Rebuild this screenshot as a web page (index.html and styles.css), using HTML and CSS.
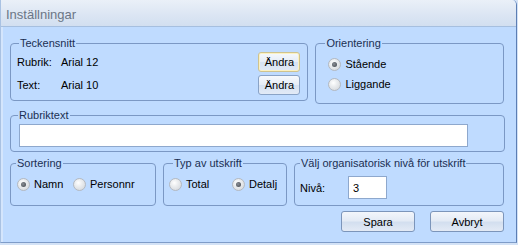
FILE: index.html
```html
<!DOCTYPE html>
<html lang="sv">
<head>
    <meta charset="UTF-8">
    <title>Inställningar</title>
    <link rel="stylesheet" href="styles.css">
</head>
<body>

    <div class="window">
        <div class="titlebar">Inställningar</div>

        <div class="content">
            <div class="row">
                <fieldset class="group fonts">
                    <legend>Teckensnitt</legend>
                    <div class="font-row">
                        <span class="key">Rubrik:</span>
                        <span class="val">Arial 12</span>
                        <button class="btn small focused">Ändra</button>
                    </div>
                    <div class="font-row">
                        <span class="key">Text:</span>
                        <span class="val">Arial 10</span>
                        <button class="btn small">Ändra</button>
                    </div>
                </fieldset>

                <fieldset class="group orient">
                    <legend>Orientering</legend>
                    <label class="radio checked"><span class="dot"></span>Stående</label>
                    <label class="radio"><span class="dot"></span>Liggande</label>
                </fieldset>
            </div>

            <fieldset class="group heading">
                <legend>Rubriktext</legend>
                <input class="field wide" type="text">
            </fieldset>

            <div class="row">
                <fieldset class="group sort">
                    <legend>Sortering</legend>
                    <div class="radio-line">
                        <label class="radio checked namn"><span class="dot"></span>Namn</label>
                        <label class="radio"><span class="dot"></span>Personnr</label>
                    </div>
                </fieldset>

                <fieldset class="group type">
                    <legend>Typ av utskrift</legend>
                    <div class="radio-line">
                        <label class="radio total"><span class="dot"></span>Total</label>
                        <label class="radio checked"><span class="dot"></span>Detalj</label>
                    </div>
                </fieldset>

                <fieldset class="group level">
                    <legend>Välj organisatorisk nivå för utskrift</legend>
                    <div class="level-row">
                        <span class="key-short">Nivå:</span>
                        <input class="field small-field" type="text" value="3">
                    </div>
                </fieldset>
            </div>

            <div class="actions">
                <button class="btn large">Spara</button>
                <button class="btn large">Avbryt</button>
            </div>
        </div>
    </div>

</body>
</html>
```

FILE: styles.css
```css
body {
    margin: 0;
    background-color: #d3e2f6;
    font-family: 'Liberation Sans', Arial, sans-serif;
    font-size: 11px;
    color: #000;
}
.window {
    width: 515px;
    height: 242px;
    background-color: #bfdbff;
    border-left: 1px solid #a9c2e3;
    border-right: 1px solid #5c7eb4;
    border-bottom: 1px solid #7f9cc8;
    border-top-right-radius: 5px;
    box-shadow: inset 2px 0 0 #d4e5fc;
    overflow: hidden;
}
.titlebar {
    height: 26px;
    line-height: 30px;
    padding-left: 5px;
    font-size: 13px;
    color: #6b7686;
    background: linear-gradient(#eaf0f8, #dbe5f3 60%, #d2dff0);
    border-bottom: 1px solid #a6bfdf;
}
.content {
    padding: 10px 12px 0 9px;
}
.row {
    display: flex;
    gap: 7px;
    align-items: flex-start;
}

/* Gruppboxar */
.group {
    box-sizing: border-box;
    margin: 0;
    min-width: 0;
    border: 1px solid #7b98c4;
    border-radius: 4px;
    padding: 0 6px;
}
.group legend {
    padding: 0 1px;
    line-height: 13px;
    color: #1b2f52;
}
.fonts {
    width: 299px;
    height: 64px;
    padding: 2px 7px 0 6px;
}
.fonts legend { margin-left: 2px; }
.font-row {
    display: flex;
    align-items: center;
    height: 20px;
    margin-bottom: 3px;
}
.key { width: 44px; }
.val { flex: 1; }

.orient {
    width: 189px;
    height: 67px;
    padding: 4px 6px 0 12px;
}
.orient legend { margin-left: -3px; }
.orient .radio { height: 20px; }

.heading {
    width: 495px;
    height: 43px;
    margin-top: 5px;
    padding: 2px 8px 0 8px;
}
.heading legend { margin-left: -1px; }

.row + .heading + .row { margin-top: 5px; }
.sort, .type, .level {
    height: 49px;
    padding-top: 4px;
}
.sort { width: 146px; padding-left: 6px; }
.sort legend { margin-left: -1px; }
.type { width: 124px; padding-left: 5px; }
.type legend { margin-left: 4px; }
.level { width: 210px; padding-left: 5px; padding-top: 6px; }
.level legend { margin-left: 0; }

/* Radioknappar */
.radio {
    display: flex;
    align-items: center;
    gap: 4px;
}
.radio-line {
    display: flex;
    height: 20px;
}
.namn { width: 56px; }
.total { width: 63px; }
.dot {
    position: relative;
    box-sizing: border-box;
    width: 13px;
    height: 13px;
    border-radius: 50%;
    border: 1px solid #b4b9c0;
    background: radial-gradient(circle at 40% 35%, #ffffff 0, #eceef0 35%, #cfd3d8 100%);
}
.checked .dot::after {
    content: "";
    position: absolute;
    left: 3px;
    top: 3px;
    width: 5px;
    height: 5px;
    border-radius: 50%;
    background: radial-gradient(circle at 40% 40%, #8a8f96, #3f434a);
}

/* Textfält */
.field {
    box-sizing: border-box;
    height: 23px;
    margin: 0;
    border: 1px solid #8ea8cd;
    background: #fff;
    font-family: 'Liberation Sans', Arial, sans-serif;
    font-size: 11px;
    padding: 0 4px;
}
.wide { width: 449px; }
.level-row {
    display: flex;
    align-items: center;
}
.key-short { width: 48px; }
.small-field { width: 39px; }

/* Knappar */
.btn {
    box-sizing: border-box;
    margin: 0;
    padding: 0;
    font-family: 'Liberation Sans', Arial, sans-serif;
    font-size: 11px;
    color: #000;
    border: 1px solid #8aa3c6;
    border-radius: 3px;
    background: linear-gradient(#f6f9fd, #e6edf7 48%, #d6e2f2 52%, #e2eaf6);
}
.small {
    width: 42px;
    height: 20px;
}
.focused {
    border-color: #cfc38e;
    box-shadow: inset 0 0 0 1px #fbf1c2;
}
.actions {
    display: flex;
    justify-content: flex-end;
    gap: 15px;
    margin-top: 5px;
}
.large {
    width: 74px;
    height: 21px;
    border-color: #7c95ba;
    background: linear-gradient(#f3f6fb, #e4ebf5 45%, #d3dfef 55%, #e3eaf5);
}
```
